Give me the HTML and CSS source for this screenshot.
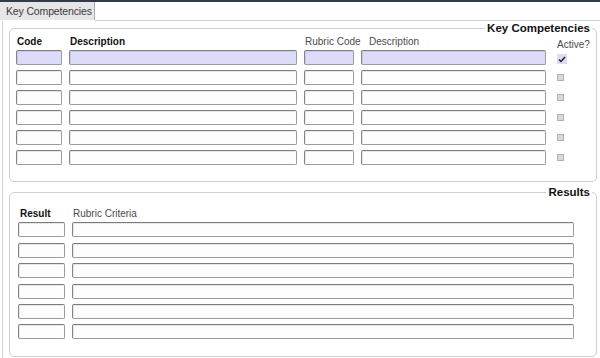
FILE: index.html
```html
<!DOCTYPE html>
<html>
<head>
<meta charset="utf-8">
<link rel="stylesheet" href="styles.css">
</head>
<body>
<div class="topbar"></div>
<div class="tabbar">
  <div class="tab">Key Competencies</div>
  <div class="tabfill"></div>
</div>
<div class="panel">
  <fieldset class="group comp">
    <legend>Key Competencies</legend>
    <div class="grid comp-grid">
      <div class="hd b">Code</div>
      <div class="hd b">Description</div>
      <div class="hd n">Rubric Code</div>
      <div class="hd n ind">Description</div>
      <div class="hd n active">Active?</div>

      <div class="in sel"></div><div class="in sel"></div><div class="in sel"></div><div class="in sel"></div>
      <div class="cb-cell"><span class="cb on"><svg width="8" height="7" viewBox="0 0 8 7"><path d="M1 3.5 L3 5.5 L7 1" fill="none" stroke="#222" stroke-width="1.5"/></svg></span></div>

      <div class="in"></div><div class="in"></div><div class="in"></div><div class="in"></div><div class="cb-cell"><span class="cb"></span></div>
      <div class="in"></div><div class="in"></div><div class="in"></div><div class="in"></div><div class="cb-cell"><span class="cb"></span></div>
      <div class="in"></div><div class="in"></div><div class="in"></div><div class="in"></div><div class="cb-cell"><span class="cb"></span></div>
      <div class="in"></div><div class="in"></div><div class="in"></div><div class="in"></div><div class="cb-cell"><span class="cb"></span></div>
      <div class="in"></div><div class="in"></div><div class="in"></div><div class="in"></div><div class="cb-cell"><span class="cb"></span></div>
    </div>
  </fieldset>

  <fieldset class="group res">
    <legend>Results</legend>
    <div class="grid res-grid">
      <div class="hd b r1">Result</div>
      <div class="hd n r2">Rubric Criteria</div>
      <div class="in"></div><div class="in"></div>
      <div class="in"></div><div class="in"></div>
      <div class="in"></div><div class="in"></div>
      <div class="in"></div><div class="in"></div>
      <div class="in"></div><div class="in"></div>
      <div class="in"></div><div class="in"></div>
    </div>
  </fieldset>
</div>
</body>
</html>
```

FILE: styles.css
```css
* { box-sizing: border-box; }
html, body {
  margin: 0;
  padding: 0;
  background: #ffffff;
  font-family: "Liberation Sans", Arial, sans-serif;
  color: #333;
  width: 600px;
  height: 358px;
  overflow: hidden;
}
.topbar {
  height: 2px;
  background: #343b48;
}
.tabbar {
  display: flex;
  height: 19px;
}
.tab {
  width: 95px;
  height: 18px;
  background: #e6e6e6;
  border-right: 1px solid #a8a8a8;
  font-size: 10.5px;
  letter-spacing: -0.15px;
  line-height: 18px;
  padding-left: 6px;
  color: #3a3a3a;
  white-space: nowrap;
}
.tabfill {
  flex: 1;
  border-bottom: 1px solid #d0d0d0;
}
.panel {
  margin-left: 2px;
  border-left: 1px solid #d4d4d4;
  height: 337px;
  padding: 1px 3px 0 6px;
}
.group {
  margin: 0;
  border: 1px solid #cfcfcf;
  border-radius: 5px;
  min-width: 0;
}
.group legend {
  margin-left: auto;
  margin-right: 4px;
  padding: 0 2px;
  font-size: 11.5px;
  font-weight: bold;
  line-height: 13px;
  color: #111;
}
.comp {
  height: 160px;
  padding: 0 0 0 6px;
}
.res {
  margin-top: 4px;
  height: 171px;
  padding: 0 0 0 8px;
}
.grid {
  display: grid;
  align-items: start;
}
.comp-grid {
  grid-template-columns: 46px 228px 50px 185px 30px;
  column-gap: 7px;
  grid-template-rows: 9px repeat(6, 15px);
  row-gap: 5px;
  margin-top: 1px;
}
.res-grid {
  grid-template-columns: 47px 502px;
  column-gap: 7px;
  grid-template-rows: 9px repeat(6, 15px);
  row-gap: 5.4px;
  margin-top: 9px;
}
.hd {
  font-size: 10px;
  line-height: 12px;
  white-space: nowrap;
}
.hd.b { font-weight: bold; color: #111; padding-left: 1px; }
.hd.n { color: #4a4a4a; padding-left: 1px; }
.hd.ind { padding-left: 8px; }
.hd.active { margin-top: 3px; padding-left: 4px; }
.hd.r1 { padding-left: 2px; }
.hd.r2 { padding-left: 1px; }
.in {
  height: 15px;
  border: 1px solid #9b9b9b;
  border-top-color: #7d7d7d;
  border-left-color: #858585;
  border-radius: 2px;
  background: #fdfdfd;
  box-shadow: inset 1px 1px 0 #e6e6e6;
}
.in.sel {
  background: #dcdcf8;
  box-shadow: inset 1px 1px 0 #c8c8ea;
}
.cb-cell {
  height: 15px;
  display: flex;
  align-items: center;
  padding-left: 4px;
}
.cb {
  display: block;
  width: 7px;
  height: 7px;
  background: #d8d8d8;
  border: 1px solid #b0b0b0;
}
.cb.on {
  width: 10px;
  height: 10px;
  margin-top: 3px;
  background: #dcdcf8;
  border: none;
  display: flex;
  align-items: center;
  justify-content: center;
}
```
